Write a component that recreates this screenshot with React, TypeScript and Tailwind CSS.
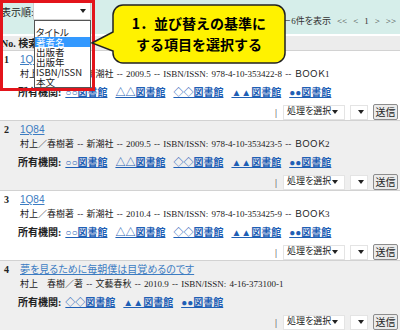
const records = [
  {
    no: 1,
    title: "1Q84",
    author: "村上／春樹著",
    pub: "新潮社",
    year: "2009.5",
    isbn: "978-4-10-353422-8",
    tail: "ＢＯＯＫ1",
    libs: ["○○図書館", "△△図書館", "◇◇図書館", "▲▲図書館", "●●図書館"],
    bg: "bg-white",
  },
  {
    no: 2,
    title: "1Q84",
    author: "村上／春樹著",
    pub: "新潮社",
    year: "2009.5",
    isbn: "978-4-10-353423-5",
    tail: "ＢＯＯＫ2",
    libs: ["○○図書館", "△△図書館", "◇◇図書館", "▲▲図書館", "●●図書館"],
    bg: "bg-[#efefef]",
  },
  {
    no: 3,
    title: "1Q84",
    author: "村上／春樹著",
    pub: "新潮社",
    year: "2010.4",
    isbn: "978-4-10-353425-9",
    tail: "ＢＯＯＫ3",
    libs: ["○○図書館", "△△図書館", "◇◇図書館", "▲▲図書館", "●●図書館"],
    bg: "bg-white",
  },
  {
    no: 4,
    title: "夢を見るために毎朝僕は目覚めるのです",
    author: "村上　春樹／著",
    pub: "文藝春秋",
    year: "2010.9",
    isbn: "4-16-373100-1",
    tail: "",
    libs: ["◇◇図書館", "▲▲図書館", "●●図書館"],
    bg: "bg-[#efefef]",
  },
];

const sortOptions = ["タイトル", "著者名", "出版者", "出版年", "ISBN/ISSN", "本文"];

function Tri() {
  return (
    <svg width="6" height="4" viewBox="0 0 6 4" className="shrink-0">
      <polygon points="0,0 6,0 3,4" fill="#222" />
    </svg>
  );
}

function Actions() {
  return (
    <div className="flex items-center justify-end h-[16px] mt-[4px] pr-[2px] gap-[5px] whitespace-nowrap">
      <span className="text-[10px] text-[#333] mr-[1px]">|</span>
      <div className="w-[62px] h-[15px] bg-white border border-[#e4e4e4] flex items-center justify-between pl-[3px] pr-[6px] text-[9px] text-[#222]">
        <span>処理を選択</span>
        <Tri />
      </div>
      <div className="w-[18px] h-[15px] bg-white border border-[#e4e4e4] flex items-center justify-center pl-[4px]">
        <Tri />
      </div>
      <div className="w-[25px] h-[16px] border border-[#8c8c8c] rounded-[2px] bg-[#ebebeb] text-[10px] text-[#222] flex items-center justify-center">
        送信
      </div>
    </div>
  );
}

function Record({ r }: { r: (typeof records)[number] }) {
  return (
    <div className={`${r.bg} h-[70px] border-t border-[#d2d2d2] flex flex-col`}>
      <div className="flex items-center h-[15px] mt-[1px] whitespace-nowrap">
        <span className="w-[20px] pl-[4px] font-bold text-[10px]">{r.no}</span>
        <span className="text-[#3c7cc2] underline font-['Liberation_Sans','Noto_Sans_CJK_JP',sans-serif] text-[10px]">
          {r.title}
        </span>
      </div>
      <div className="flex items-center h-[15px] pl-[20px] text-[9px] text-[#222] whitespace-nowrap [word-spacing:1px]">
        {r.author} -- {r.pub} -- {r.year} -- ISBN/ISSN: {r.isbn}
        {r.tail && <>&nbsp;-- {r.tail}</>}
      </div>
      <div className="flex items-center h-[16px] mt-[3px] pl-[18px] gap-[8px] text-[10px] whitespace-nowrap">
        <span className="font-bold text-[#222] -mr-[4px]">所有機関:</span>
        {r.libs.map((l) => (
          <span key={l} className="text-[#1f5fb5] underline font-bold">
            {l}
          </span>
        ))}
      </div>
      <Actions />
    </div>
  );
}

export default function App() {
  return (
    <div className="relative w-[400px] h-[333px] overflow-hidden bg-white font-['Liberation_Serif','Noto_Sans_CJK_JP',serif] [font-feature-settings:'palt'] text-[#222]">
      <div className="h-[34px] bg-[#d6eeea] flex justify-between">
        <div className="flex items-start pt-[2px] text-[10px] whitespace-nowrap">
          <span className="pl-[1px] pt-[3px] w-[33px]">表示順:</span>
          <div className="w-[58px] h-[18px] bg-white border border-[#cfcfcf] flex items-center justify-end pr-[4px]">
            <Tri />
          </div>
        </div>
        <div className="self-end pb-[6px] pr-[4px] text-[9px] text-[#333] flex gap-[6px] whitespace-nowrap">
          <span>P1－6件を表示</span>
          <span>&lt;&lt;</span>
          <span>&lt;</span>
          <span>1</span>
          <span>&gt;</span>
          <span>&gt;&gt;</span>
        </div>
      </div>
      <div className="mt-[2px] h-[14px] bg-[#ececec] flex items-center text-[10px] font-bold pl-[1px] whitespace-nowrap">
        No. 検索結果
      </div>
      {records.map((r) => (
        <Record key={r.no} r={r} />
      ))}

      {/* open sort dropdown */}
      <div className="absolute left-[34px] top-[20px] w-[57px] bg-white border border-[#555] text-[9.5px] leading-[10px] font-['Noto_Sans_CJK_JP',sans-serif] whitespace-nowrap">
        <div className="h-[6px]" />
        {sortOptions.map((o) => (
          <div
            key={o}
            className={`h-[10px] pl-[1px] ${o === "著者名" ? "bg-[#3399ff] text-white" : "text-[#222]"}`}
          >
            {o}
          </div>
        ))}
      </div>
      <div className="absolute left-0 top-0 w-[95px] h-[91px] border-[3px] border-[#e3141b]" />

      {/* callout */}
      <svg className="absolute left-[90px] top-[3px]" width="198" height="63" viewBox="0 0 198 63">
        <path
          d="M33,2 H185 A10,10 0 0 1 195,12 V50 A10,10 0 0 1 185,60 H33 A10,10 0 0 1 23,50 V48 L2,40 L23,29 V12 A10,10 0 0 1 33,2 Z"
          fill="#fff200"
          stroke="#222"
          strokeWidth="1.5"
        />
      </svg>
      <div className="absolute left-[113px] top-[5px] w-[172px] h-[58px] flex flex-col items-center justify-center font-['Noto_Sans_CJK_JP',sans-serif] [font-feature-settings:normal] font-bold text-[14px] leading-[21px] text-black whitespace-nowrap">
        <span>1．並び替えの基準に</span>
        <span>する項目を選択する</span>
      </div>
    </div>
  );
}
